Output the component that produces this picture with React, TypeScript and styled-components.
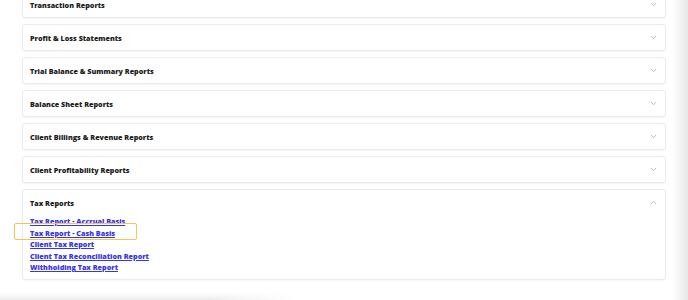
import React from 'react'
import styled, { createGlobalStyle } from 'styled-components'

const GlobalStyle = createGlobalStyle`
  html, body {
    margin: 0;
    padding: 0;
    background: #ffffff;
    overflow: hidden;
  }
  body {
    font-family: "Open Sans", "Liberation Sans", sans-serif;
  }
`

const Page = styled.div`
  display: flex;
  width: 688px;
  height: 300px;
  overflow: hidden;
`

const Main = styled.div`
  flex: 1;
  padding: 0 0 0 22px;
`

const List = styled.div`
  width: 644px;
  margin-top: -9px;
  display: flex;
  flex-direction: column;
  gap: 6px;
`

const Card = styled.div`
  background: #fff;
  border: 1px solid #ebebeb;
  border-radius: 3px;
  box-shadow: 0 1px 1px rgba(0, 0, 0, 0.04);
`

const Header = styled.div`
  height: 25px;
  display: flex;
  align-items: center;
  justify-content: space-between;
  padding: 0 7px 0 7px;
`

const Title = styled.span`
  font-size: 7.2px;
  font-weight: 800;
  color: #1c1c1c;
`

const Chevron = styled.svg`
  width: 9px;
  height: 9px;
  color: #a0a0a0;
`

const Body = styled.div`
  display: flex;
  flex-direction: column;
  padding: 1px 7px 5px;
`

const LinkRow = styled.div<{ $marked?: boolean }>`
  position: relative;
  height: 11.5px;
  display: flex;
  align-items: center;
  ${p => p.$marked && `
    &::before {
      content: "";
      position: absolute;
      left: -16px;
      top: -5px;
      width: 121px;
      height: 15px;
      border: 1px solid #f5c253;
      border-radius: 2px;
    }
  `}
`

const ReportLink = styled.a`
  font-size: 7.2px;
  font-weight: 800;
  color: #3535ea;
  text-decoration: underline;
  line-height: 1;
`

const SideShade = styled.div`
  width: 16px;
  flex: none;
  background: linear-gradient(to right, #ffffff, #ececec 80%, #e6e6e6);
`

const BottomShade = styled.div`
  position: fixed;
  left: 0;
  bottom: 0;
  width: 300px;
  height: 8px;
  background: linear-gradient(to bottom, rgba(255,255,255,0), rgba(0,0,0,0.07));
  -webkit-mask-image: linear-gradient(to right, #000 70%, transparent);
  mask-image: linear-gradient(to right, #000 70%, transparent);
`

const Down = () => (
  <Chevron viewBox="0 0 24 24" fill="none" stroke="currentColor" strokeWidth="2" strokeLinecap="round" strokeLinejoin="round">
    <path d="m6 9 6 6 6-6" />
  </Chevron>
)

const Up = () => (
  <Chevron viewBox="0 0 24 24" fill="none" stroke="currentColor" strokeWidth="2" strokeLinecap="round" strokeLinejoin="round">
    <path d="m18 15-6-6-6 6" />
  </Chevron>
)

const sections = [
  'Transaction Reports',
  'Profit & Loss Statements',
  'Trial Balance & Summary Reports',
  'Balance Sheet Reports',
  'Client Billings & Revenue Reports',
  'Client Profitability Reports',
]

const taxLinks = [
  'Tax Report - Accrual Basis',
  'Tax Report - Cash Basis',
  'Client Tax Report',
  'Client Tax Reconciliation Report',
  'Withholding Tax Report',
]

export default function App() {
  return (
    <>
      <GlobalStyle />
      <Page>
        <Main>
          <List>
            {sections.map(s => (
              <Card key={s}>
                <Header>
                  <Title>{s}</Title>
                  <Down />
                </Header>
              </Card>
            ))}
            <Card>
              <Header>
                <Title>Tax Reports</Title>
                <Up />
              </Header>
              <Body>
                {taxLinks.map((l, i) => (
                  <LinkRow key={l} $marked={i === 1}>
                    <ReportLink href="#">{l}</ReportLink>
                  </LinkRow>
                ))}
              </Body>
            </Card>
          </List>
        </Main>
        <SideShade />
      </Page>
      <BottomShade />
    </>
  )
}
